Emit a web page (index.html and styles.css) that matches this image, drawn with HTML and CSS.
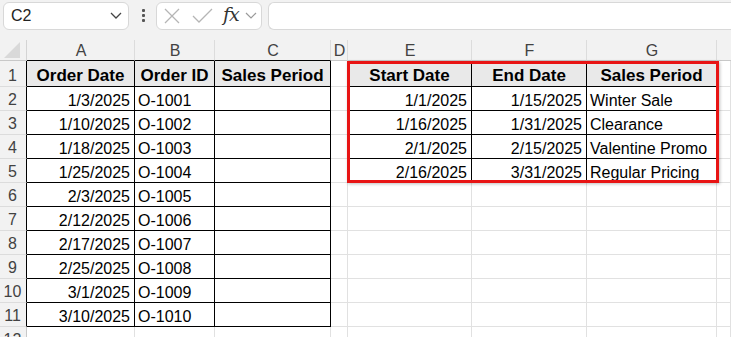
FILE: index.html
```html
<!DOCTYPE html>
<html lang="en">
<head>
	<meta charset="UTF-8">
	<title>Sales Period</title>
	<link rel="stylesheet" href="styles.css">
</head>
<body>
	<div class="toolbar">
		<div class="namebox">
			<span>C2</span>
			<svg class="chev" width="12" height="7" viewBox="0 0 12 7"><path d="M1 1l5 5 5-5" fill="none" stroke="#444" stroke-width="1.3"/></svg>
		</div>
		<div class="kebab"><i></i><i></i><i></i></div>
		<div class="fxbox">
			<svg width="16" height="16" viewBox="0 0 16 16"><path d="M1 1l14 14M15 1L1 15" fill="none" stroke="#b5b5b5" stroke-width="1.3"/></svg>
			<svg width="21" height="15" viewBox="0 0 21 15"><path d="M1 8l6 6L20 1" fill="none" stroke="#b5b5b5" stroke-width="1.3"/></svg>
			<span class="fx">fx</span>
			<svg width="12" height="7" viewBox="0 0 12 7"><path d="M1 1l5 5 5-5" fill="none" stroke="#9a9a9a" stroke-width="1.2"/></svg>
		</div>
		<div class="formula"></div>
	</div>

	<div class="sheet">
		<!-- column headers -->
		<div class="c corner"><svg width="16" height="16" viewBox="0 0 16 16"><path d="M16 0V16H0Z" fill="#d9d9d9"/></svg></div>
		<div class="c ch top">A</div>
		<div class="c ch top">B</div>
		<div class="c ch top">C</div>
		<div class="c ch">D</div>
		<div class="c ch">E</div>
		<div class="c ch">F</div>
		<div class="c ch">G</div>
		<div class="c ch last"></div>

		<!-- row 1 -->
		<div class="c rh edge">1</div>
		<div class="c t hd">Order Date</div>
		<div class="c t hd">Order ID</div>
		<div class="c t hd">Sales Period</div>
		<div class="c"></div>
		<div class="c t hd">Start Date</div>
		<div class="c t hd">End Date</div>
		<div class="c t hd">Sales Period</div>
		<div class="c"></div>

		<div class="c rh edge">2</div>
		<div class="c t r">1/3/2025</div>
		<div class="c t">O-1001</div>
		<div class="c t"></div>
		<div class="c"></div>
		<div class="c t r">1/1/2025</div>
		<div class="c t r">1/15/2025</div>
		<div class="c t">Winter Sale</div>
		<div class="c"></div>

		<div class="c rh edge">3</div>
		<div class="c t r">1/10/2025</div>
		<div class="c t">O-1002</div>
		<div class="c t"></div>
		<div class="c"></div>
		<div class="c t r">1/16/2025</div>
		<div class="c t r">1/31/2025</div>
		<div class="c t">Clearance</div>
		<div class="c"></div>

		<div class="c rh edge">4</div>
		<div class="c t r">1/18/2025</div>
		<div class="c t">O-1003</div>
		<div class="c t"></div>
		<div class="c"></div>
		<div class="c t r">2/1/2025</div>
		<div class="c t r">2/15/2025</div>
		<div class="c t">Valentine Promo</div>
		<div class="c"></div>

		<div class="c rh edge">5</div>
		<div class="c t r">1/25/2025</div>
		<div class="c t">O-1004</div>
		<div class="c t"></div>
		<div class="c"></div>
		<div class="c t r">2/16/2025</div>
		<div class="c t r">3/31/2025</div>
		<div class="c t">Regular Pricing</div>
		<div class="c"></div>

		<div class="c rh edge">6</div>
		<div class="c t r">2/3/2025</div>
		<div class="c t">O-1005</div>
		<div class="c t"></div>
		<div class="c"></div><div class="c"></div><div class="c"></div><div class="c"></div><div class="c"></div>

		<div class="c rh edge">7</div>
		<div class="c t r">2/12/2025</div>
		<div class="c t">O-1006</div>
		<div class="c t"></div>
		<div class="c"></div><div class="c"></div><div class="c"></div><div class="c"></div><div class="c"></div>

		<div class="c rh edge">8</div>
		<div class="c t r">2/17/2025</div>
		<div class="c t">O-1007</div>
		<div class="c t"></div>
		<div class="c"></div><div class="c"></div><div class="c"></div><div class="c"></div><div class="c"></div>

		<div class="c rh edge">9</div>
		<div class="c t r">2/25/2025</div>
		<div class="c t">O-1008</div>
		<div class="c t"></div>
		<div class="c"></div><div class="c"></div><div class="c"></div><div class="c"></div><div class="c"></div>

		<div class="c rh edge">10</div>
		<div class="c t r">3/1/2025</div>
		<div class="c t">O-1009</div>
		<div class="c t"></div>
		<div class="c"></div><div class="c"></div><div class="c"></div><div class="c"></div><div class="c"></div>

		<div class="c rh edge">11</div>
		<div class="c t r">3/10/2025</div>
		<div class="c t">O-1010</div>
		<div class="c t"></div>
		<div class="c"></div><div class="c"></div><div class="c"></div><div class="c"></div><div class="c"></div>

		<div class="c rh">12</div>
		<div class="c"></div><div class="c"></div><div class="c"></div><div class="c"></div>
		<div class="c"></div><div class="c"></div><div class="c"></div><div class="c"></div>

		<!-- red outline round the lookup table -->
		<div class="selbox"></div>
	</div>
</body>
</html>
```

FILE: styles.css
```css
*{
	box-sizing: border-box;
	margin: 0;
	padding: 0;
}
body{
	background: #f2f2f2;
	font-family: 'Liberation Sans', Arial, sans-serif;
	font-size: 16px;
	color: #000;
	overflow: hidden;
}
.toolbar{
	display: flex;
	align-items: center;
	height: 40px;
	padding: 1px 0 10px 3px;
}
.namebox, .fxbox, .formula{
	height: 28px;
	background: #fff;
	border: 1px solid #d8d8d8;
	border-radius: 6px;
}
.namebox{
	display: flex;
	align-items: center;
	justify-content: space-between;
	width: 126px;
	padding: 0 6px 0 7px;
	color: #222;
}
.namebox span{
	padding-top: 1px;
}
.kebab{
	display: flex;
	flex-direction: column;
	gap: 2px;
	width: 27px;
	align-items: center;
	padding-left: 1px;
}
.kebab i{
	display: block;
	width: 3px;
	height: 3px;
	background: #555;
	border-radius: 1px;
}
.fxbox{
	display: flex;
	align-items: center;
	width: 106px;
	padding-left: 7px;
}
.fxbox svg:nth-child(2){
	margin-left: 12px;
}
.fx{
	font-family: 'DejaVu Serif', 'Liberation Serif', serif;
	font-style: italic;
	font-size: 19px;
	letter-spacing: -1px;
	color: #333;
	margin-left: 10px;
	line-height: 1;
	padding-bottom: 2px;
}
.fxbox svg:last-child{
	margin-left: 6px;
}
.formula{
	flex: 1;
	margin-left: 6px;
	border-right: 0;
	border-radius: 6px 0 0 6px;
}

.sheet{
	position: relative;
	display: grid;
	grid-template-columns: 27px 108px 80px 116px 17px 124px 115px 130px 1fr;
	grid-template-rows: 21px 26px repeat(10, 24px) 24px;
}
.c{
	display: flex;
	align-items: flex-end;
	padding: 0 3px 0 3px;
	background: #fff;
	border-right: 1px solid #e1e1e1;
	border-bottom: 1px solid #e1e1e1;
	white-space: nowrap;
	overflow: hidden;
	line-height: 18px;
}
.corner{
	background: #f2f2f2;
	align-items: center;
	justify-content: center;
	padding: 0 3px 0 0;
	border-right-color: #d4d4d4;
	border-bottom-color: #c8c8c8;
}
.ch{
	background: #f2f2f2;
	justify-content: center;
	align-items: center;
	color: #424242;
	padding: 2px 0 0 1px;
	border-right-color: #dcdcdc;
	border-bottom-color: #c8c8c8;
}
.ch.last{
	border-right: 0;
}
.ch.top{
	border-bottom-color: #000;
}
.rh{
	background: #f2f2f2;
	justify-content: center;
	color: #424242;
	padding: 0 1px 1px 0;
	border-right-color: #c8c8c8;
	border-bottom-color: #dcdcdc;
}
.rh.edge{
	border-right-color: #000;
}
.t{
	border-right-color: #000;
	border-bottom-color: #000;
}
.hd{
	background: #e9e9e9;
	font-weight: bold;
	font-size: 17px;
	justify-content: center;
	padding-bottom: 1px;
}
.r{
	justify-content: flex-end;
	padding-right: 4px;
}
.selbox{
	position: absolute;
	grid-column: 6 / 9;
	grid-row: 2 / 7;
	top: 0;
	bottom: 0;
	left: -1px;
	right: -2px;
	border: 3px solid #e81414;
	box-shadow: 1px 1px 3px rgba(0,0,0,0.25);
	pointer-events: none;
}
```
